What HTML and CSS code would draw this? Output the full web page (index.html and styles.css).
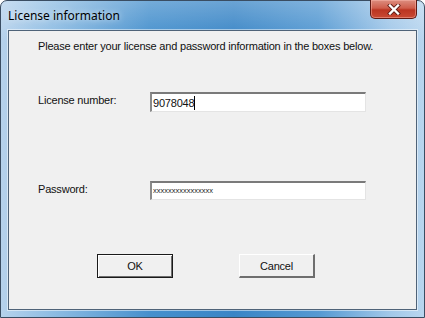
FILE: index.html
```html
<!DOCTYPE html>
<html lang="en">
<head>
  <meta charset="UTF-8">
  <meta name="viewport" content="width=device-width, initial-scale=1.0">
  <title>License information</title>
  <link rel="stylesheet" href="styles.css">
</head>
<body>
  <div class="window">
    <div class="titlebar">
      <span class="title">License information</span>
      <button class="close-btn" title="Close">
        <svg width="14" height="11" viewBox="0 0 14 11">
          <path d="M3 1.5 L11 9.5 M11 1.5 L3 9.5" stroke="#5a1a14" stroke-width="4" stroke-linecap="square"/>
          <path d="M3 1.5 L11 9.5 M11 1.5 L3 9.5" stroke="#ffffff" stroke-width="2.4" stroke-linecap="square"/>
        </svg>
      </button>
    </div>
    <div class="client">
      <p class="intro">Please enter your license and password information in the boxes below.</p>
      <div class="field-row first">
        <label class="field-label">License number:</label>
        <div class="textbox"><span>9078048</span><span class="caret"></span></div>
      </div>
      <div class="field-row second">
        <label class="field-label">Password:</label>
        <div class="textbox password"><span>xxxxxxxxxxxxxxxx</span></div>
      </div>
      <div class="buttons">
        <button class="btn default">OK</button>
        <button class="btn">Cancel</button>
      </div>
    </div>
  </div>
</body>
</html>
```

FILE: styles.css
```css
body {
  margin: 0;
  padding: 0;
  background-color: #ffffff;
  font-family: 'Liberation Sans', Arial, sans-serif;
}
.window {
  width: 425px;
  height: 318px;
  box-sizing: border-box;
  border: 1px solid #3a4d62;
  border-radius: 7px 7px 0 0;
  padding: 0 7px 7px 7px;
  display: flex;
  flex-direction: column;
  background:
    linear-gradient(to bottom, rgba(255, 255, 255, 0.25), rgba(255, 255, 255, 0) 40px),
    linear-gradient(to right, #b6d2ec 0%, #8fbde3 12%, #4690cd 35%, #3985c6 55%, #5599d2 75%, #a2c8e9 92%, #b9d6ef 100%);
}
.titlebar {
  height: 29px;
  display: flex;
  align-items: flex-start;
  position: relative;
}
.title {
  font-family: 'Noto Sans', sans-serif;
  font-size: 12px;
  color: #000000;
  margin-top: 6px;
  text-shadow: 0 0 6px rgba(255, 255, 255, 0.9);
}
.close-btn {
  position: absolute;
  right: 0;
  top: -1px;
  width: 47px;
  height: 19px;
  padding: 0;
  border: 1px solid #5e1a14;
  border-top: none;
  border-radius: 0 0 5px 5px;
  background: linear-gradient(to bottom, #dc8e80 0%, #cf5d4b 45%, #bb3522 55%, #c94a34 100%);
  box-shadow: inset 0 0 0 1px rgba(255, 190, 180, 0.45);
  display: flex;
  align-items: center;
  justify-content: center;
}
.client {
  flex: 1;
  background-color: #f0f0f0;
  border: 1px solid #4f6378;
  box-shadow: 0 0 0 1px rgba(255, 255, 255, 0.5);
  padding: 9px 0 0 29px;
  font-size: 11px;
  letter-spacing: -0.2px;
  color: #111111;
}
.intro {
  margin: 0;
  line-height: 13px;
}
.field-row {
  display: flex;
  align-items: flex-start;
}
.field-row.first {
  margin-top: 39px;
}
.field-row.second {
  margin-top: 69px;
}
.field-label {
  width: 112px;
  line-height: 13px;
  padding-top: 2px;
}
.textbox {
  width: 216px;
  height: 20px;
  box-sizing: border-box;
  background-color: #ffffff;
  border-style: solid;
  border-width: 2px 1px 1px 2px;
  border-color: #7a7a7a #e4e4e4 #e4e4e4 #8a8a8a;
  padding: 2px 0 0 1px;
  line-height: 14px;
  display: flex;
  align-items: flex-start;
}
.second .textbox {
  height: 19px;
}
.caret {
  display: inline-block;
  width: 1px;
  height: 14px;
  background-color: #000000;
}
.password span {
  font-size: 7.5px;
  letter-spacing: 0;
  line-height: 12px;
  color: #222222;
}
.buttons {
  display: flex;
  gap: 66px;
  margin: 54px 0 0 59px;
}
.btn {
  width: 76px;
  height: 24px;
  box-sizing: border-box;
  background-color: #f0f0f0;
  font-family: 'Liberation Sans', Arial, sans-serif;
  font-size: 11px;
  letter-spacing: -0.2px;
  color: #111111;
  border-style: solid;
  border-width: 1px 2px 2px 1px;
  border-color: #ffffff #6e6e6e #6e6e6e #ffffff;
  padding: 0;
}
.btn.default {
  border: 1px solid #1a1a1a;
  box-shadow: inset 1px 1px 0 #ffffff, inset -1px -1px 0 #6e6e6e;
}
```
